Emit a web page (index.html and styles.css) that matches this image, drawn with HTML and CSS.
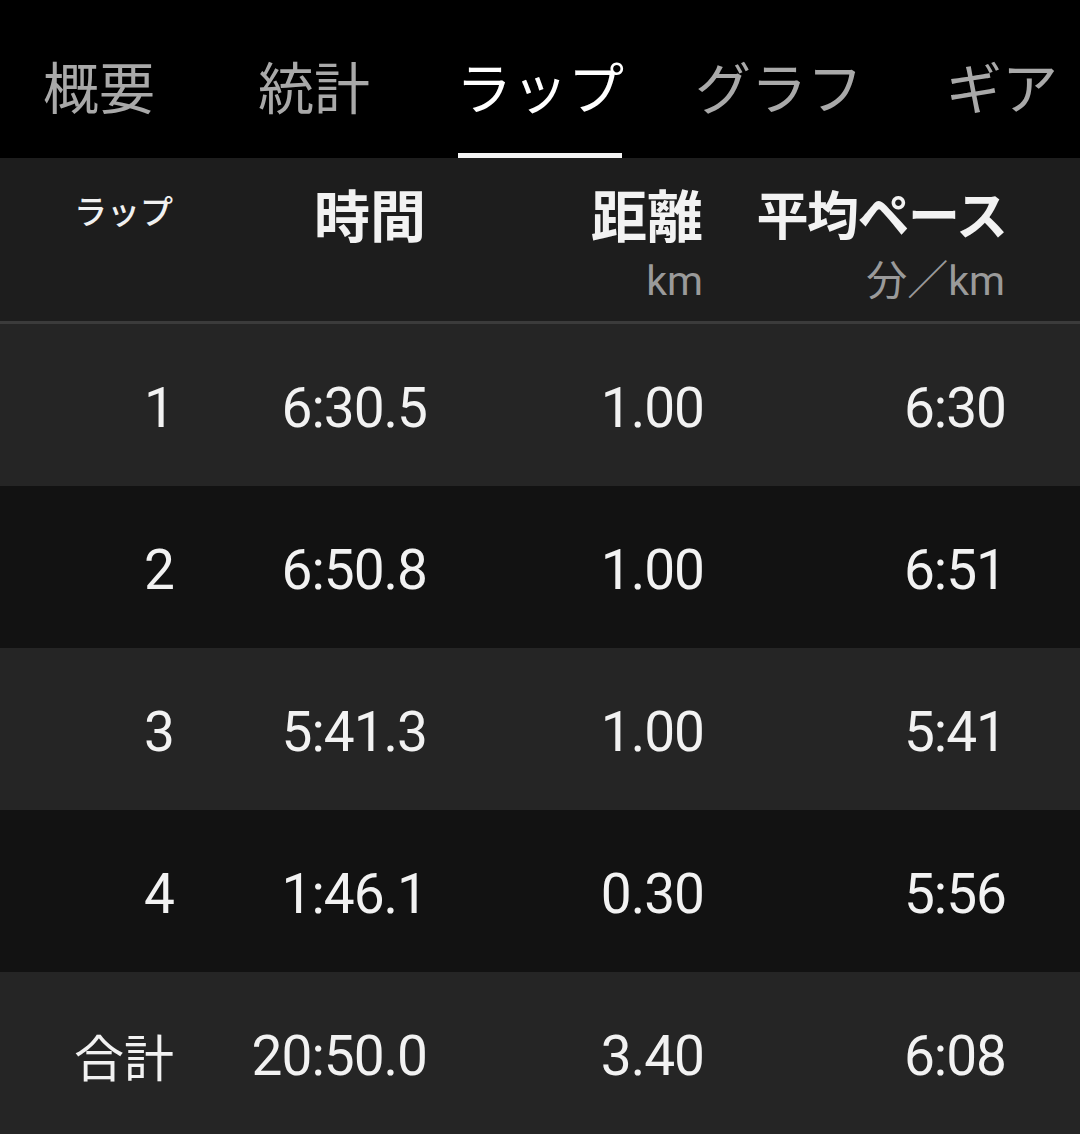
FILE: index.html
```html
<!DOCTYPE html>
<html lang="ja">
<head>
<meta charset="utf-8">
<link rel="stylesheet" href="styles.css">
</head>
<body>
<nav class="tabs">
  <div class="tab">概要</div>
  <div class="tab">統計</div>
  <div class="tab active">ラップ</div>
  <div class="tab">グラフ</div>
  <div class="tab">ギア</div>
</nav>
<section class="table">
  <div class="head">
    <div class="cell"><span class="lap-title">ラップ</span></div>
    <div class="cell"><span class="col-title">時間</span></div>
    <div class="cell"><span class="col-title">距離</span><span class="unit">km</span></div>
    <div class="cell"><span class="col-title pace">平均ペース</span><span class="unit">分／km</span></div>
  </div>
  <div class="row light">
    <div class="cell">1</div><div class="cell">6:30.5</div><div class="cell">1.00</div><div class="cell">6:30</div>
  </div>
  <div class="row dark">
    <div class="cell">2</div><div class="cell">6:50.8</div><div class="cell">1.00</div><div class="cell">6:51</div>
  </div>
  <div class="row light">
    <div class="cell">3</div><div class="cell">5:41.3</div><div class="cell">1.00</div><div class="cell">5:41</div>
  </div>
  <div class="row dark">
    <div class="cell">4</div><div class="cell">1:46.1</div><div class="cell">0.30</div><div class="cell">5:56</div>
  </div>
  <div class="row light total">
    <div class="cell"><span class="total-label">合計</span></div><div class="cell">20:50.0</div><div class="cell">3.40</div><div class="cell">6:08</div>
  </div>
</section>
</body>
</html>
```
FILE: styles.css
```css
html, body {
  margin: 0;
  padding: 0;
  background: #000;
}
body {
  width: 1080px;
  height: 1134px;
  overflow: hidden;
  font-family: Roboto, "Noto Sans CJK JP", sans-serif;
  color: #f2f2f2;
}
.tabs {
  display: flex;
  height: 158px;
  background: #000;
  padding-left: 43px;
  box-sizing: border-box;
  white-space: nowrap;
}
.tab {
  position: relative;
  font-family: "Noto Sans CJK JP", sans-serif;
  font-size: 56px;
  line-height: 146px;
  padding-top: 12px;
  color: #a9a9a9;
}
.tab:nth-child(2) { margin-left: 103px; }
.tab:nth-child(3) { margin-left: 86px; }
.tab:nth-child(4) { margin-left: 71px; }
.tab:nth-child(5) { margin-left: 83px; }
.tab.active {
  color: #fff;
}
.tab.active::after {
  content: "";
  position: absolute;
  left: 2px;
  right: 2px;
  bottom: 0;
  height: 5px;
  background: #f4f4f4;
}
.table {
  display: flex;
  flex-direction: column;
}
.head, .row {
  display: grid;
  grid-template-columns: 173px 253px 277px 302px;
  padding-right: 75px;
}
.head {
  height: 163px;
  background: #1d1d1d;
  border-bottom: 3px solid #3b3b3b;
}
.head .cell {
  display: flex;
  flex-direction: column;
  align-items: flex-end;
  padding-top: 24px;
}
.lap-title {
  font-family: "Noto Sans CJK JP", sans-serif;
  font-size: 33px;
  font-weight: 500;
  line-height: 56px;
  color: #f0f0f0;
}
.col-title {
  font-family: "Noto Sans CJK JP", sans-serif;
  font-size: 56px;
  font-weight: 700;
  line-height: 62px;
  color: #f2f2f2;
}
.col-title.pace {
  font-size: 52px;
  letter-spacing: -1.5px;
  margin-right: -1.5px;
}
.unit {
  font-family: Roboto, "Noto Sans CJK JP", sans-serif;
  font-size: 41px;
  line-height: 48px;
  color: #9a9a9a;
  margin-top: 13px;
}
.row {
  height: 162px;
  align-items: center;
}
.row .cell {
  text-align: right;
  font-size: 55px;
  letter-spacing: -1px;
  margin-right: -1px;
  line-height: 60px;
  padding-top: 6px;
}
.light { background: #252525; }
.dark { background: #121212; }
.total-label {
  font-family: "Noto Sans CJK JP", sans-serif;
  font-size: 50px;
  letter-spacing: 0;
}
```
